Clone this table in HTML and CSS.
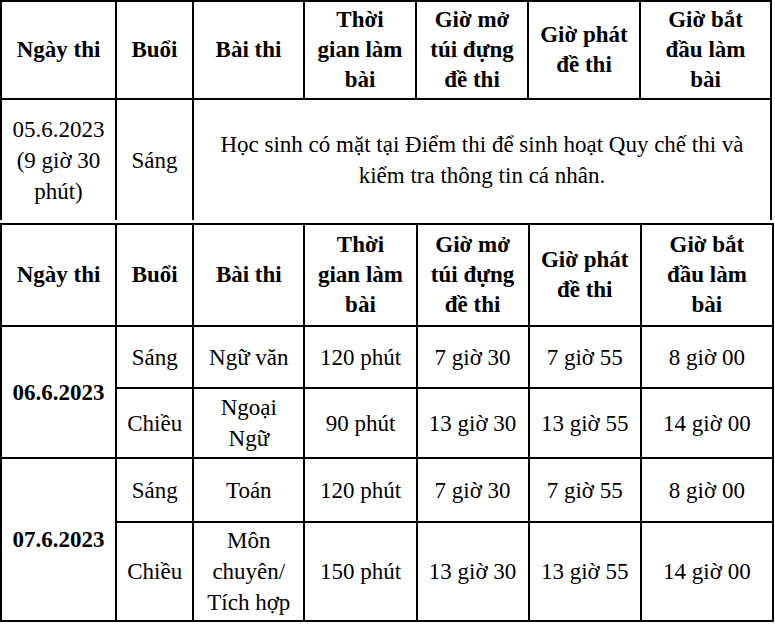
FILE: index.html
```html
<!DOCTYPE html>
<html lang="vi">
<head>
<meta charset="utf-8">
<title>Lịch thi</title>
<link rel="stylesheet" href="styles.css">
</head>
<body>
<table class="sched sched-first">
  <colgroup>
    <col class="c-date"><col class="c-session"><col class="c-subject"><col class="c-time"><col class="c-open"><col class="c-hand"><col class="c-start-a">
  </colgroup>
  <tr class="head head-a">
    <th>Ngày thi</th>
    <th>Buổi</th>
    <th>Bài thi</th>
    <th>Thời gian làm bài</th>
    <th>Giờ mở túi đựng đề thi</th>
    <th>Giờ phát đề thi</th>
    <th>Giờ bắt đầu làm bài</th>
  </tr>
  <tr class="intro">
    <td class="date-note">05.6.2023<br>(9 giờ 30 phút)</td>
    <td>Sáng</td>
    <td colspan="5" class="note">Học sinh có mặt tại Điểm thi để sinh hoạt Quy chế thi và kiểm tra thông tin cá nhân.</td>
  </tr>
</table>
<table class="sched sched-second">
  <colgroup>
    <col class="c-date"><col class="c-session"><col class="c-subject"><col class="c-time"><col class="c-open"><col class="c-hand"><col class="c-start-b">
  </colgroup>
  <tr class="head head-b">
    <th>Ngày thi</th>
    <th>Buổi</th>
    <th>Bài thi</th>
    <th>Thời gian làm bài</th>
    <th>Giờ mở túi đựng đề thi</th>
    <th>Giờ phát đề thi</th>
    <th>Giờ bắt đầu làm bài</th>
  </tr>
  <tr class="r1">
    <td rowspan="2" class="day">06.6.2023</td>
    <td>Sáng</td>
    <td>Ngữ văn</td>
    <td>120 phút</td>
    <td>7 giờ 30</td>
    <td>7 giờ 55</td>
    <td>8 giờ 00</td>
  </tr>
  <tr class="r2">
    <td>Chiều</td>
    <td>Ngoại Ngữ</td>
    <td>90 phút</td>
    <td>13 giờ 30</td>
    <td>13 giờ 55</td>
    <td>14 giờ 00</td>
  </tr>
  <tr class="r3">
    <td rowspan="2" class="day">07.6.2023</td>
    <td>Sáng</td>
    <td>Toán</td>
    <td>120 phút</td>
    <td>7 giờ 30</td>
    <td>7 giờ 55</td>
    <td>8 giờ 00</td>
  </tr>
  <tr class="r4">
    <td>Chiều</td>
    <td>Môn chuyên/ Tích hợp</td>
    <td>150 phút</td>
    <td>13 giờ 30</td>
    <td>13 giờ 55</td>
    <td>14 giờ 00</td>
  </tr>
</table>
</body>
</html>
```

FILE: styles.css
```css
html, body {
  margin: 0;
  padding: 0;
  background: #ffffff;
}

body {
  font-family: "Liberation Serif", "Times New Roman", serif;
  font-size: 23px;
  color: #000000;
}

.sched {
  border-collapse: collapse;
  table-layout: fixed;
}

.sched-first {
  width: 772px;
}

.sched-second {
  width: 774px;
  margin-top: 3px;
}

.c-date { width: 115px; }
.c-session { width: 77px; }
.c-subject { width: 111px; }
.c-time { width: 112px; }
.c-open { width: 112px; }
.c-hand { width: 112px; }
.c-start-a { width: 131px; }
.c-start-b { width: 132px; }

.sched th,
.sched td {
  border: 2px solid #000000;
  padding: 0 9px;
  text-align: center;
  vertical-align: middle;
}

.sched th {
  font-weight: bold;
  line-height: 30px;
}

.sched td {
  font-weight: normal;
  line-height: 31px;
}

.head-a { height: 98px; }
.head-b { height: 102px; }

.intro { height: 121px; }
.intro td { border-bottom: none; }

.date-note { line-height: 32px; }
.note { line-height: 29px; padding-top: 6px; }

.sched td.day { font-weight: bold; }

.r1 { height: 62px; }
.r2 { height: 70px; }
.r3 { height: 64px; }
.r4 { height: 99px; }
```
